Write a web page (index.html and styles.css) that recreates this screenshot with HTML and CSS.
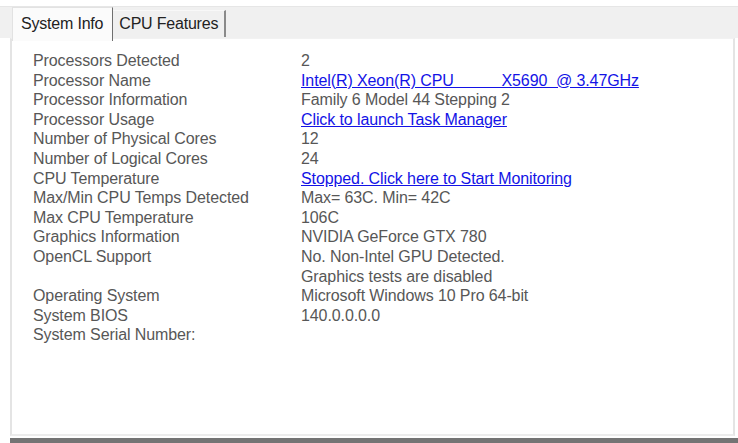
FILE: index.html
```html
<!DOCTYPE html>
<html lang="en">

<head>
    <meta charset="UTF-8">
    <meta name="viewport" content="width=device-width, initial-scale=1.0">
    <title>System Info</title>
    <link rel="stylesheet" href="styles.css">
</head>

<body>
    <div class="window">
        <div class="tabstrip">
            <div class="tab active">System Info</div>
            <div class="tab">CPU Features</div>
        </div>

        <div class="panel">
            <div class="info-row">
                <span class="label">Processors Detected</span>
                <span class="value">2</span>
            </div>
            <div class="info-row">
                <span class="label">Processor Name</span>
                <a class="value link pre" href="#">Intel(R) Xeon(R) CPU           X5690  @ 3.47GHz</a>
            </div>
            <div class="info-row">
                <span class="label">Processor Information</span>
                <span class="value">Family 6 Model 44 Stepping 2</span>
            </div>
            <div class="info-row">
                <span class="label">Processor Usage</span>
                <a class="value link" href="#">Click to launch Task Manager</a>
            </div>
            <div class="info-row">
                <span class="label">Number of Physical Cores</span>
                <span class="value">12</span>
            </div>
            <div class="info-row">
                <span class="label">Number of Logical Cores</span>
                <span class="value">24</span>
            </div>
            <div class="info-row">
                <span class="label">CPU Temperature</span>
                <a class="value link" href="#">Stopped. Click here to Start Monitoring</a>
            </div>
            <div class="info-row">
                <span class="label">Max/Min CPU Temps Detected</span>
                <span class="value">Max= 63C. Min= 42C</span>
            </div>
            <div class="info-row">
                <span class="label">Max CPU Temperature</span>
                <span class="value">106C</span>
            </div>
            <div class="info-row">
                <span class="label">Graphics Information</span>
                <span class="value">NVIDIA GeForce GTX 780</span>
            </div>
            <div class="info-row">
                <span class="label">OpenCL Support</span>
                <span class="value">No. Non-Intel GPU Detected.<br>Graphics tests are disabled</span>
            </div>
            <div class="info-row">
                <span class="label">Operating System</span>
                <span class="value">Microsoft Windows 10 Pro 64-bit</span>
            </div>
            <div class="info-row">
                <span class="label">System BIOS</span>
                <span class="value">140.0.0.0.0</span>
            </div>
            <div class="info-row">
                <span class="label">System Serial Number:</span>
                <span class="value"></span>
            </div>
        </div>

        <div class="bottom-bar"></div>
    </div>
</body>

</html>
```

FILE: styles.css
```css
body {
    margin: 0;
    padding: 0;
    background-color: #fff;
    font-family: "Liberation Sans", Arial, sans-serif;
    font-size: 16px;
    color: #575757;
}

.window {
    width: 738px;
    height: 443px;
    padding-top: 6px;
    box-sizing: border-box;
    overflow: hidden;
}

/* tab header row */
.tabstrip {
    display: flex;
    align-items: flex-end;
    height: 32px;
    padding-left: 12px;
    background-color: #f0f0f0;
    border-top: 1px solid #e6e6e6;
    box-sizing: border-box;
}

.tab {
    height: 27px;
    padding: 0 6px 0 6px;
    line-height: 26px;
    color: #222;
    letter-spacing: -0.2px;
    border-left: 1px solid #8a8a8a;
    border-right: 2px solid #8a8a8a;
    border-top: 1px solid #f8f8f8;
    box-sizing: border-box;
    margin-bottom: 1px;
}

.tab.active {
    height: 34px;
    line-height: 32px;
    padding: 0 9px 0 8px;
    margin-bottom: -3px;
    background-color: #fbfbfb;
    border-left: 1px solid #e2e2e2;
    border-top: 1px solid #e2e2e2;
    border-right: 1px solid #6f6f6f;
    position: relative;
    z-index: 1;
}

.tab.active + .tab {
    border-left: none;
}

/* content area */
.panel {
    margin-left: 10px;
    width: 725px;
    height: 398px;
    padding: 12px 0 0 21px;
    box-sizing: border-box;
    background-color: #fff;
    border-left: 2px solid #e4e4e4;
    border-right: 2px solid #e4e4e4;
    border-top: 1px solid #f2f2f2;
    border-bottom: 2px solid #ececec;
}

.info-row {
    display: grid;
    grid-template-columns: 268px 1fr;
    line-height: 19.6px;
    letter-spacing: -0.1px;
}

.link {
    color: #1313e6;
    text-decoration: underline;
}

.pre {
    white-space: pre;
}

.bottom-bar {
    margin-left: 10px;
    margin-top: 2px;
    height: 6px;
    background-color: #747474;
}
```
